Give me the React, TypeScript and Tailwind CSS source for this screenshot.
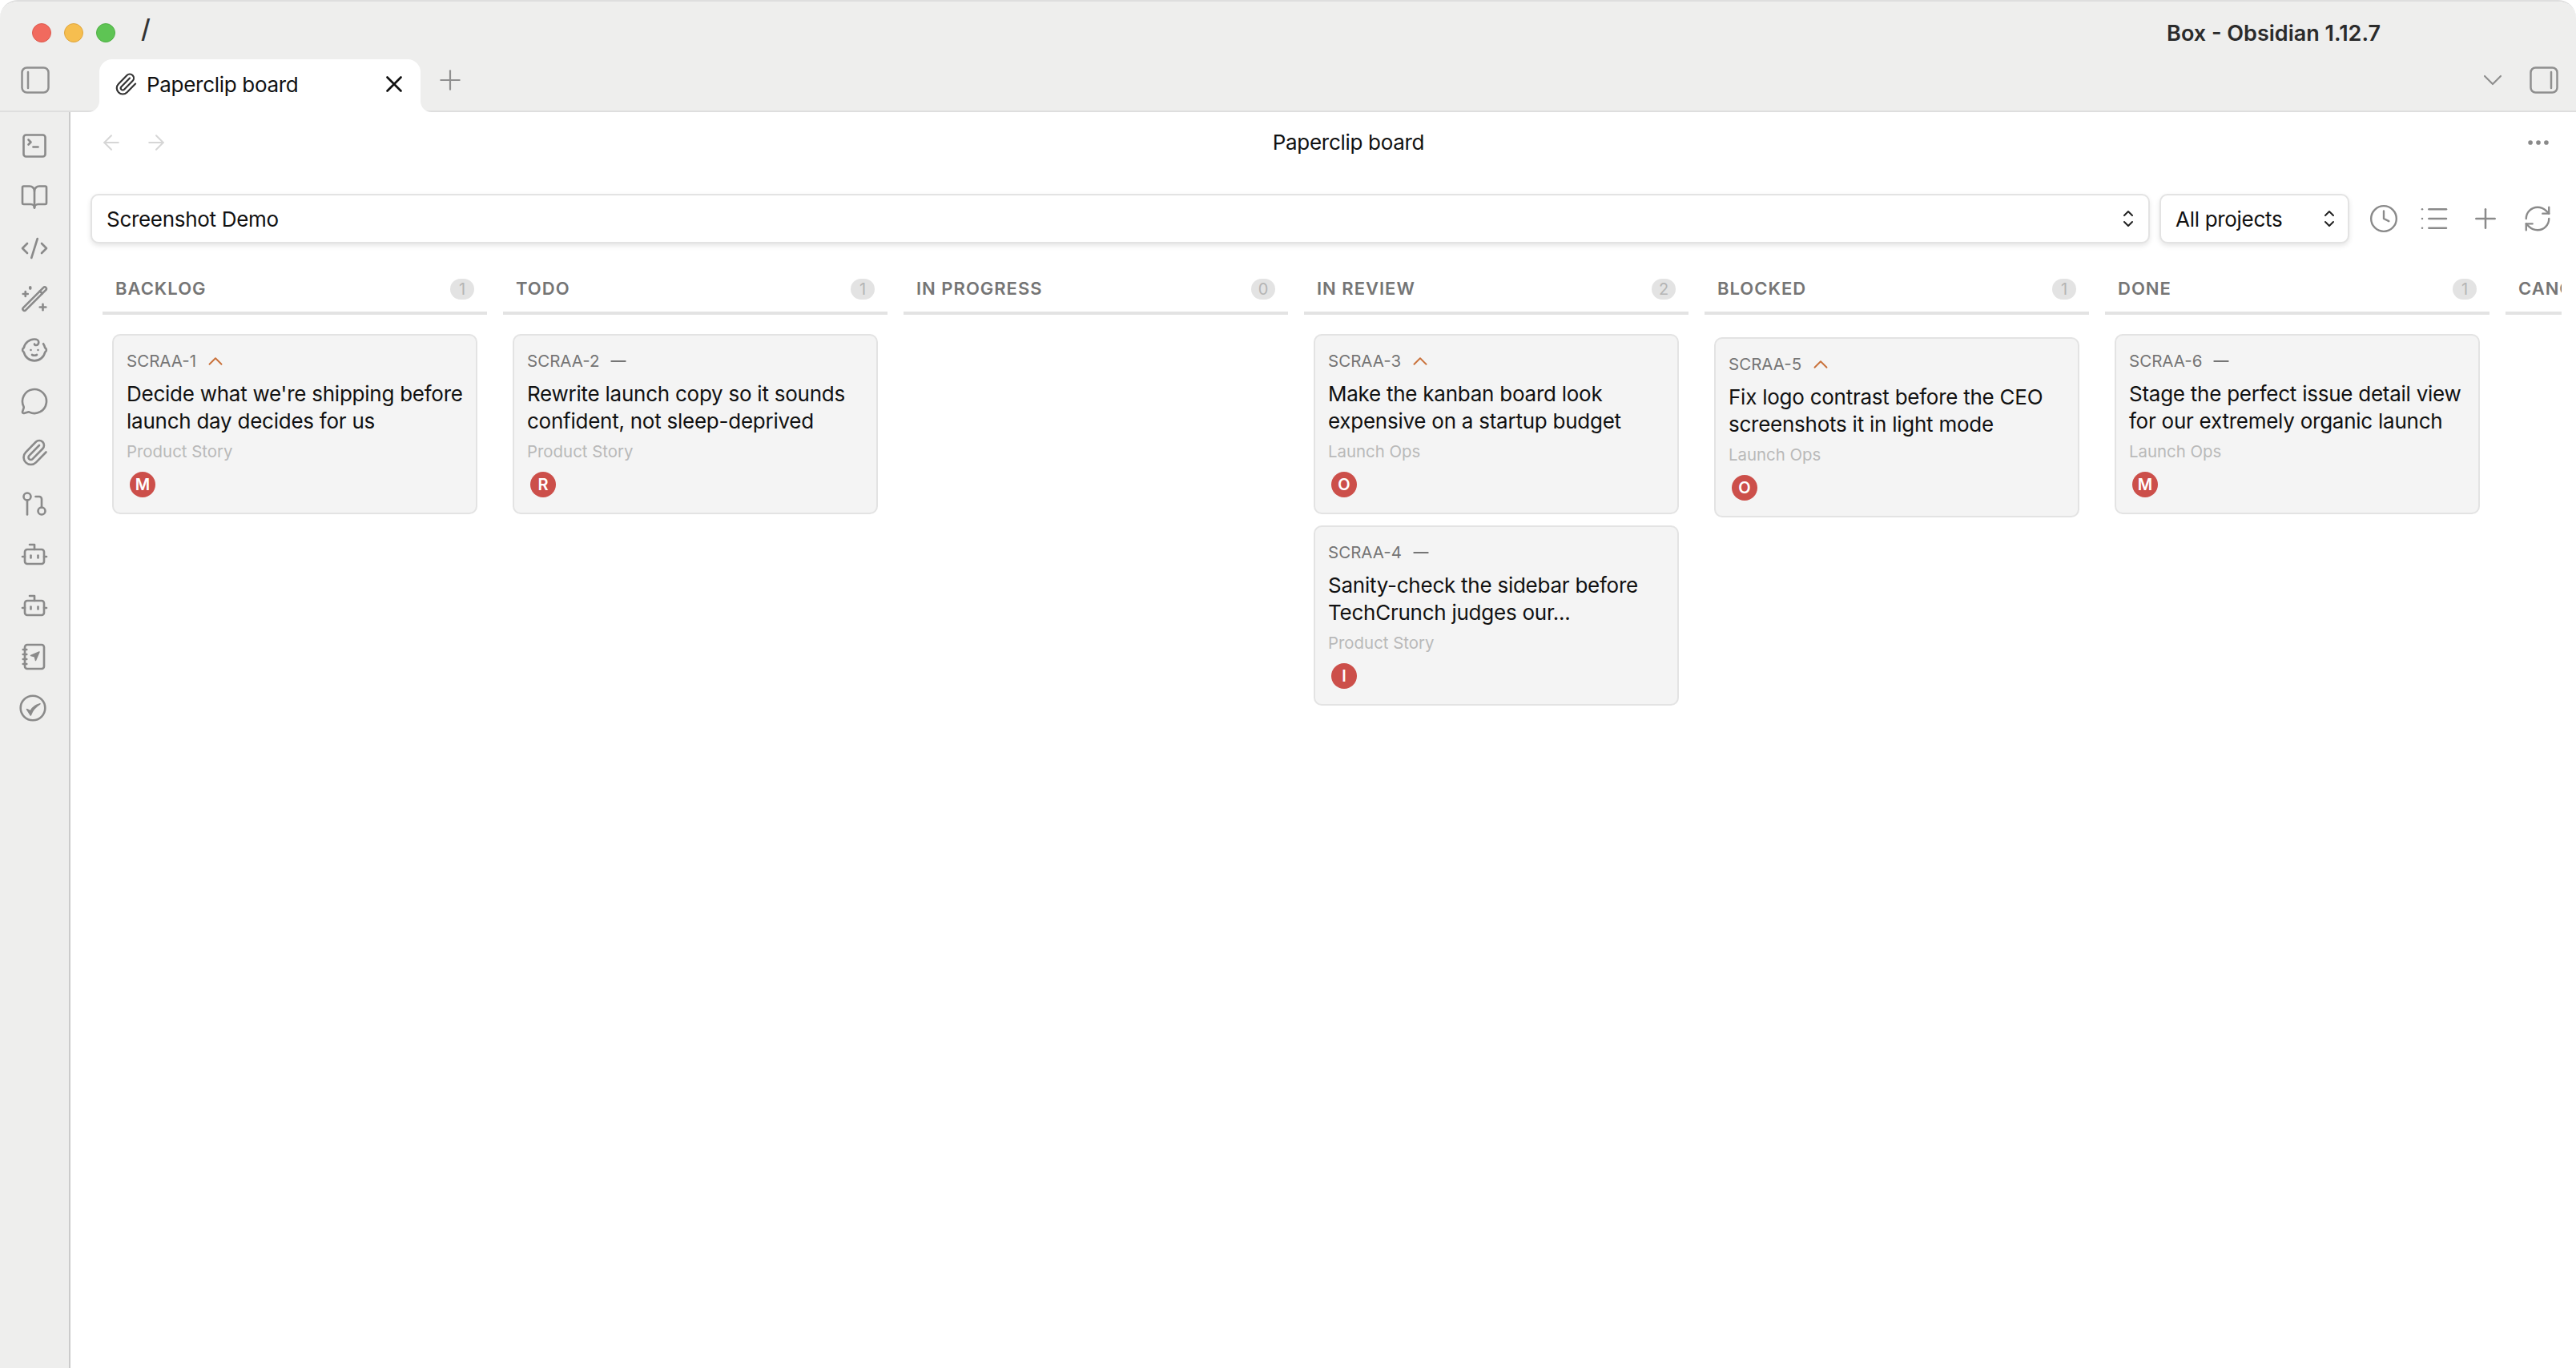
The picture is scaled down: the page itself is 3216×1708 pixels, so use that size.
import React from "react";
import {
  SquareTerminal, BookOpen, CodeXml, Baby, MessageCircle, Paperclip,
  GitPullRequest, Bot, X, Plus, ArrowLeft, ArrowRight, Ellipsis, ChevronDown, ChevronUp,
  Minus, Clock, List, RefreshCw,
} from "lucide-react";

const ribbonIcon = { size: 36, strokeWidth: 1.75, color: "#8a8a8a" };

function Wand() {
  return (
    <svg width="36" height="36" viewBox="0 0 24 24" fill="none" stroke="#8a8a8a" strokeWidth="1.75" strokeLinecap="round" strokeLinejoin="round">
      <path d="M19.6 2.6a1.2 1.2 0 0 1 1.8 0l.2.2a1.2 1.2 0 0 1 0 1.8L4.6 21.6a1.2 1.2 0 0 1-1.8 0l-.2-.2a1.2 1.2 0 0 1 0-1.8z" />
      <path d="M16.5 5.7l2 2" />
      <path d="M2.5 8h4" /><path d="M4.5 6v4" />
      <path d="M8.5 2.6v.8" strokeWidth="2.4" />
      <path d="M16.5 19h5" /><path d="M19 16.5v5" />
    </svg>
  );
}

function NotebookNav() {
  return (
    <svg width="36" height="36" viewBox="0 0 24 24" fill="none" stroke="#8a8a8a" strokeWidth="1.75" strokeLinecap="round" strokeLinejoin="round">
      <path d="M2.5 6h3" /><path d="M2.5 10h3" /><path d="M2.5 14h3" /><path d="M2.5 18h3" />
      <rect x="4" y="2" width="16" height="20" rx="2" />
      <path d="M16 8l-7 3 3.2.8.8 3.2z" fill="#8a8a8a" strokeWidth="1" />
    </svg>
  );
}

function CircleTick() {
  return (
    <svg width="36" height="36" viewBox="0 0 24 24" fill="none" stroke="#8a8a8a" strokeWidth="1.75" strokeLinecap="round" strokeLinejoin="round" className="-ml-[4px]">
      <circle cx="12" cy="12" r="10.2" />
      <path d="M7 13l3.2 5C11.5 14 14 11 18 8.5c-4 1-6.5 3-8 6z" fill="#8a8a8a" strokeWidth="1" />
    </svg>
  );
}

function SidebarIcon({ side }: { side: "left" | "right" }) {
  return (
    <svg width="36" height="34" viewBox="0 0 36 34" fill="none" stroke="#8f8f8f">
      <rect x="1.5" y="1.5" width="33" height="31" rx="6" strokeWidth="2.5" />
      <path d={side === "left" ? "M9 7v20" : "M27 7v20"} strokeWidth="2.5" strokeLinecap="round" />
    </svg>
  );
}

function UpDown() {
  return (
    <svg width="14" height="22" viewBox="0 0 14 22" fill="none" stroke="#222222" strokeWidth="2" strokeLinecap="round" strokeLinejoin="round" className="shrink-0">
      <path d="M2 7l5-5 5 5" />
      <path d="M2 15l5 5 5-5" />
    </svg>
  );
}

type Card = { id: string; high: boolean; title: string[]; project: string; who: string };
type Column = { name: string; count: number; cards: Card[]; shift?: boolean };

const columns: Column[] = [
  { name: "BACKLOG", count: 1, cards: [{ id: "SCRAA-1", high: true, title: ["Decide what we're shipping before", "launch day decides for us"], project: "Product Story", who: "M" }] },
  { name: "TODO", count: 1, cards: [{ id: "SCRAA-2", high: false, title: ["Rewrite launch copy so it sounds", "confident, not sleep-deprived"], project: "Product Story", who: "R" }] },
  { name: "IN PROGRESS", count: 0, cards: [] },
  {
    name: "IN REVIEW", count: 2, cards: [
      { id: "SCRAA-3", high: true, title: ["Make the kanban board look", "expensive on a startup budget"], project: "Launch Ops", who: "O" },
      { id: "SCRAA-4", high: false, title: ["Sanity-check the sidebar before", "TechCrunch judges our..."], project: "Product Story", who: "I" },
    ],
  },
  { name: "BLOCKED", count: 1, shift: true, cards: [{ id: "SCRAA-5", high: true, title: ["Fix logo contrast before the CEO", "screenshots it in light mode"], project: "Launch Ops", who: "O" }] },
  { name: "DONE", count: 1, cards: [{ id: "SCRAA-6", high: false, title: ["Stage the perfect issue detail view", "for our extremely organic launch"], project: "Launch Ops", who: "M" }] },
  { name: "CANCELLED", count: 0, cards: [] },
];

function IssueCard({ card }: { card: Card }) {
  return (
    <div className="rounded-[10px] border-2 border-[#e3e3e3] bg-[#f4f4f4] px-4 pt-[16px] pb-[19px]">
      <div className="flex h-[32px] items-center gap-[9px] text-[20.5px] leading-[32px] text-[#757575]">
        <span>{card.id}</span>
        {card.high ? (
          <ChevronUp size={30} strokeWidth={1.5} color="#c9713a" />
        ) : (
          <Minus size={30} strokeWidth={1.5} color="#757575" />
        )}
      </div>
      <div className="mt-[8px] text-[26px] leading-[34px] tracking-[-0.25px] text-[#111111]">
        {card.title.map((l) => (
          <div key={l} className="whitespace-nowrap">{l}</div>
        ))}
      </div>
      <div className="mt-[6px] h-[30px] text-[20.4px] leading-[30px] text-[#b9b9b9]">{card.project}</div>
      <div className="ml-[4px] mt-[10px] flex h-[32px] w-[32px] items-center justify-center rounded-full bg-[#cc4f4a] text-[20px] font-semibold leading-none text-white">
        {card.who}
      </div>
    </div>
  );
}

function BoardColumn({ col }: { col: Column }) {
  return (
    <div className="w-[480px] shrink-0">
      <div className="flex h-[57px] items-center justify-between border-b-4 border-[#e3e3e3] pb-[4px] pl-[16px] pr-[16px]">
        <span className="whitespace-nowrap text-[22px] font-semibold tracking-[1px] text-[#757575]">{col.name}</span>
        <span className="flex h-[26px] w-[30px] items-center justify-center rounded-full bg-[#e3e3e3] text-[20px] leading-none text-[#b5b5b5]">{col.count}</span>
      </div>
      <div className={`flex flex-col gap-[14px] px-[12px] ${col.shift ? "pt-[28px]" : "pt-[24px]"}`}>
        {col.cards.map((c) => (
          <IssueCard key={c.id} card={c} />
        ))}
      </div>
    </div>
  );
}

export default function App() {
  return (
    <div className="h-[1708px] w-[3216px] overflow-hidden bg-white [font-family:Inter,sans-serif]">
      <div className="flex h-full flex-col overflow-hidden rounded-t-[22px] border-t-2 border-[#dedede]">
        {/* title bar */}
        <div className="flex h-[72px] shrink-0 items-center bg-[#eeeeed] pl-[40px]">
          <div className="flex gap-[16px] pt-[6px]">
            <span className="h-[24px] w-[24px] rounded-full border border-[#dd5b50] bg-[#f16a5e]" />
            <span className="h-[24px] w-[24px] rounded-full border border-[#dfa63d] bg-[#f6be4f]" />
            <span className="h-[24px] w-[24px] rounded-full border border-[#4fb045] bg-[#5ec454]" />
          </div>
          <span className="ml-[32px] -mt-[4px] text-[32px] font-medium leading-none text-[#333333]">/</span>
          <span className="ml-auto mr-[244px] mt-[9px] whitespace-nowrap text-[27px] font-semibold text-[#2b2b2b]">Box - Obsidian 1.12.7</span>
        </div>
        {/* tab strip */}
        <div className="flex h-[66px] shrink-0 items-center border-b-2 border-[#dedede] bg-[#eeeeed] pl-[26px] pr-[22px]">
          <div className="-mt-[13px]"><SidebarIcon side="left" /></div>
          <div className="relative z-10 ml-[62px] -mb-[2px] flex h-[66px] w-[401px] items-center self-end rounded-t-[16px] bg-white pb-[4px] pl-[18px] pr-[16px]">
            <svg width="14" height="14" viewBox="0 0 14 14" className="absolute -left-[14px] bottom-0"><path d="M14 0v14H0c8 0 14-6 14-14z" fill="#ffffff" /></svg>
            <Paperclip size={30} strokeWidth={1.75} color="#333333" />
            <span className="ml-[11px] whitespace-nowrap text-[26px] tracking-[-0.3px] text-[#111111]">Paperclip board</span>
            <X size={34} strokeWidth={1.9} color="#111111" className="ml-auto" />
            <svg width="14" height="14" viewBox="0 0 14 14" className="absolute -right-[14px] bottom-0"><path d="M0 0v14h14C6 14 0 8 0 0z" fill="#ffffff" /></svg>
          </div>
          <div className="ml-[17px] -mt-[13px]"><Plus size={40} strokeWidth={1.3} color="#8f8f8f" /></div>
          <div className="ml-auto -mt-[13px]"><ChevronDown size={40} strokeWidth={1.3} color="#8f8f8f" /></div>
          <div className="ml-[26px] -mt-[13px]"><SidebarIcon side="right" /></div>
        </div>
        {/* body */}
        <div className="flex min-h-0 flex-1">
          <div className="flex w-[88px] shrink-0 flex-col items-center gap-[27.8px] border-r-2 border-[#cbcbcb] bg-[#eeeeed] pt-[24px]">
            <SquareTerminal {...ribbonIcon} />
            <BookOpen {...ribbonIcon} />
            <CodeXml {...ribbonIcon} />
            <Wand />
            <Baby {...ribbonIcon} />
            <MessageCircle {...ribbonIcon} />
            <Paperclip {...ribbonIcon} />
            <GitPullRequest {...ribbonIcon} />
            <Bot {...ribbonIcon} />
            <Bot {...ribbonIcon} />
            <NotebookNav />
            <CircleTick />
          </div>
          <div className="flex min-w-0 flex-1 flex-col">
            {/* nav */}
            <div className="flex h-[75px] shrink-0 items-center pl-[36px] pr-[30px]">
              <ArrowLeft size={30} strokeWidth={1.6} color="#d6d6d6" />
              <ArrowRight size={30} strokeWidth={1.6} color="#d6d6d6" className="ml-[26px]" />
              <div className="flex flex-1 justify-center pl-[5px]">
                <span className="whitespace-nowrap text-[26px] tracking-[-0.3px] text-[#111111]">Paperclip board</span>
              </div>
              <Ellipsis size={34} strokeWidth={2} color="#8a8a8a" />
            </div>
            {/* controls */}
            <div className="mt-[27px] flex h-[62px] shrink-0 items-center pl-[25px] pr-[29px]">
              <div className="flex h-[62px] min-w-0 flex-1 items-center justify-between rounded-[10px] border-2 border-[#e3e3e3] bg-white pl-[18px] pr-[18px] shadow-[0_3px_6px_rgba(0,0,0,0.1)]">
                <span className="text-[26px] tracking-[-0.3px] text-[#111111]">Screenshot Demo</span>
                <UpDown />
              </div>
              <div className="ml-[12px] flex h-[62px] w-[237px] shrink-0 items-center justify-between rounded-[10px] border-2 border-[#e3e3e3] bg-white pl-[18px] pr-[16px] shadow-[0_3px_6px_rgba(0,0,0,0.1)]">
                <span className="text-[26px] tracking-[-0.3px] text-[#111111]">All projects</span>
                <UpDown />
              </div>
              <div className="ml-[24px] flex items-center">
                <Clock size={38} strokeWidth={1.5} color="#8a8a8a" />
                <List size={40} strokeWidth={1.5} color="#8a8a8a" className="ml-[24px]" />
                <Plus size={40} strokeWidth={1.5} color="#8a8a8a" className="ml-[24px]" />
                <RefreshCw size={38} strokeWidth={1.5} color="#8a8a8a" className="ml-[26px]" />
              </div>
            </div>
            {/* board */}
            <div className="ml-[40px] mr-[18px] mt-[32px] flex min-h-0 flex-1 gap-[20px] overflow-hidden">
              {columns.map((c) => (
                <BoardColumn key={c.name} col={c} />
              ))}
            </div>
          </div>
        </div>
      </div>
    </div>
  );
}
